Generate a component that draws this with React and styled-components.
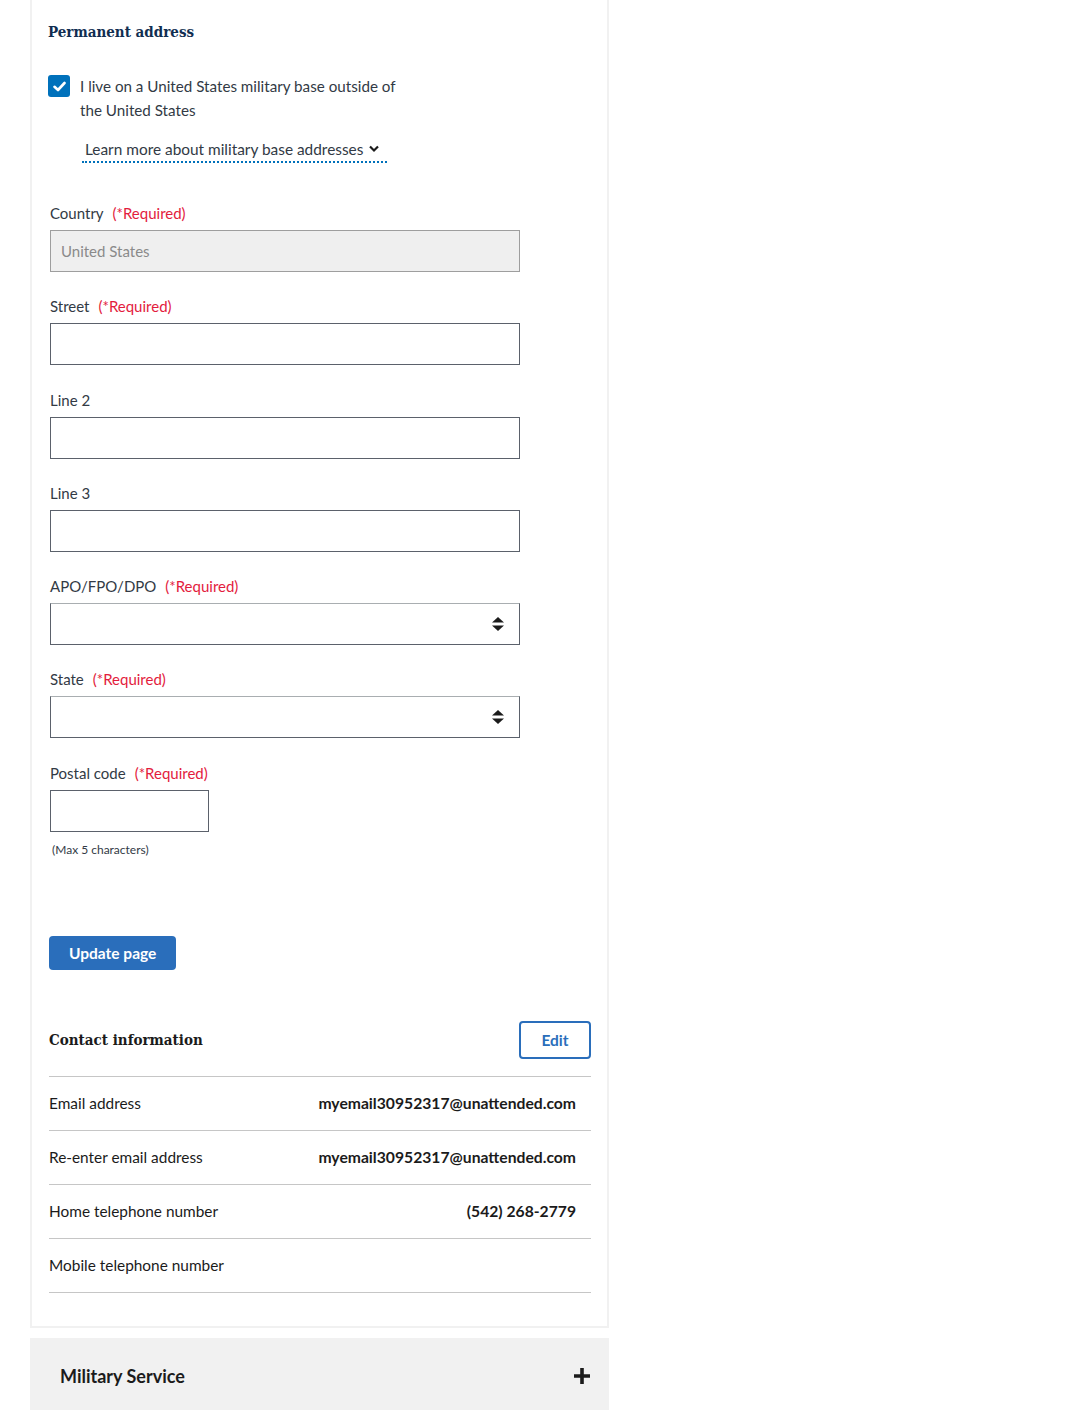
import React, { useState } from 'react';
import styled, { createGlobalStyle } from 'styled-components';

const GlobalStyle = createGlobalStyle`
  body {
    margin: 0;
    background: #ffffff;
    font-family: Lato, "Liberation Sans", sans-serif;
    color: #323a45;
  }
  * {
    box-sizing: border-box;
  }
`;

const SelectArrows = () => (
  <svg width="12" height="14" viewBox="0 0 12 14" aria-hidden="true">
    <path d="M6 0 L12 5.5 H0 Z" fill="#1b1b1b" />
    <path d="M6 14 L12 8.5 H0 Z" fill="#1b1b1b" />
  </svg>
);

const ChevronDown = () => (
  <svg width="10" height="8" viewBox="0 0 10 8" aria-hidden="true">
    <path d="M1 1.5 L5 5.5 L9 1.5" fill="none" stroke="#1b1b1b" strokeWidth="2.2" />
  </svg>
);

const CheckMark = () => (
  <svg width="13" height="11" viewBox="0 0 13 11" aria-hidden="true">
    <path d="M1.5 5.8 L5 9 L11.5 2" fill="none" stroke="#ffffff" strokeWidth="2.6" strokeLinecap="round" strokeLinejoin="round" />
  </svg>
);

const PlusIcon = () => (
  <svg width="16" height="16" viewBox="0 0 16 16" aria-hidden="true">
    <path d="M6.2 0 H9.8 V6.2 H16 V9.8 H9.8 V16 H6.2 V9.8 H0 V6.2 H6.2 Z" fill="#1b1b1b" />
  </svg>
);

const fields = [
  { label: 'Country', required: true, kind: 'disabled', value: 'United States' },
  { label: 'Street', required: true, kind: 'text' },
  { label: 'Line 2', kind: 'text' },
  { label: 'Line 3', kind: 'text' },
  { label: 'APO/FPO/DPO', required: true, kind: 'select' },
  { label: 'State', required: true, kind: 'select' },
  { label: 'Postal code', required: true, kind: 'short', hint: '(Max 5 characters)' },
];

const contactRows = [
  { label: 'Email address', value: 'myemail30952317@unattended.com' },
  { label: 'Re-enter email address', value: 'myemail30952317@unattended.com' },
  { label: 'Home telephone number', value: '(542) 268-2779' },
  { label: 'Mobile telephone number', value: '' },
];

const App = () => {
  const [onBase, setOnBase] = useState(true);

  return (
    <Page>
      <GlobalStyle />
      <Panel>
        <SectionTitle>Permanent address</SectionTitle>

        <CheckRow>
          <CheckBox type="button" checked={onBase} onClick={() => setOnBase(!onBase)}>
            {onBase && <CheckMark />}
          </CheckBox>
          <CheckLabel>I live on a United States military base outside of the United States</CheckLabel>
        </CheckRow>

        <LearnMore type="button">
          Learn more about military base addresses <ChevronDown />
        </LearnMore>

        <Fields>
          {fields.map((f) => (
            <Field key={f.label}>
              <FieldLabel>
                {f.label}
                {f.required && <Required>(*Required)</Required>}
              </FieldLabel>
              {f.kind === 'select' ? (
                <SelectBox>
                  <SelectArrows />
                </SelectBox>
              ) : (
                <TextInput
                  disabled={f.kind === 'disabled'}
                  $short={f.kind === 'short'}
                  defaultValue={f.value || ''}
                />
              )}
              {f.hint && <Hint>{f.hint}</Hint>}
            </Field>
          ))}
        </Fields>

        <PrimaryButton type="button">Update page</PrimaryButton>

        <ContactHeader>
          <ContactTitle>Contact information</ContactTitle>
          <OutlineButton type="button">Edit</OutlineButton>
        </ContactHeader>

        <InfoList>
          {contactRows.map((r) => (
            <InfoRow key={r.label}>
              <span>{r.label}</span>
              <InfoValue>{r.value}</InfoValue>
            </InfoRow>
          ))}
        </InfoList>
      </Panel>

      <Accordion>
        <AccordionTitle>Military Service</AccordionTitle>
        <PlusIcon />
      </Accordion>
    </Page>
  );
};

const Page = styled.div`
  width: 609px;
  padding-left: 30px;
`;

const Panel = styled.section`
  border: 2px solid #f1f1f1;
  border-top: none;
  padding: 20px 16px 33px 17px;
`;

const SectionTitle = styled.h3`
  margin: 0 0 0 -1px;
  font-family: "DejaVu Serif Condensed", "DejaVu Serif", serif;
  font-size: 15px;
  line-height: 24px;
  font-weight: 700;
  color: #112e51;
`;

const CheckRow = styled.div`
  display: flex;
  align-items: flex-start;
  gap: 10px;
  margin-top: 30px;
  margin-left: -1px;
  width: 370px;
`;

const CheckBox = styled.button`
  flex: none;
  display: flex;
  align-items: center;
  justify-content: center;
  width: 22px;
  height: 22px;
  margin-top: 1px;
  padding: 0;
  border: none;
  border-radius: 3px;
  background: ${(p) => (p.checked ? '#0071bb' : '#ffffff')};
  box-shadow: ${(p) => (p.checked ? 'none' : 'inset 0 0 0 2px #757575')};
  cursor: pointer;
`;

const CheckLabel = styled.span`
  font-size: 15.2px;
  line-height: 24px;
  color: #323a45;
`;

const LearnMore = styled.button`
  display: flex;
  align-items: center;
  gap: 6px;
  margin: 15px 0 0 33px;
  padding: 0 8px 0 3px;
  border: none;
  border-bottom: 2px dotted #0071bb;
  background: none;
  font-family: inherit;
  font-size: 15.4px;
  line-height: 24px;
  color: #323a45;
  cursor: pointer;
`;

const Fields = styled.div`
  display: flex;
  flex-direction: column;
  gap: 22.3px;
  margin-top: 38px;
  padding-left: 1px;
`;

const Field = styled.div`
  display: flex;
  flex-direction: column;
  align-items: flex-start;
`;

const FieldLabel = styled.label`
  display: flex;
  gap: 9px;
  font-size: 15px;
  line-height: 24px;
  color: #323a45;
`;

const Required = styled.span`
  color: #e31c3d;
`;

const TextInput = styled.input`
  width: ${(p) => (p.$short ? '159px' : '470px')};
  height: 42px;
  margin-top: 5px;
  padding: 0 10px;
  border: 1px solid #5b616b;
  border-radius: 0;
  background: #ffffff;
  font-family: inherit;
  font-size: 15px;
  color: #323a45;

  &:disabled {
    background: #efefef;
    border-color: #9e9e9e;
    color: #8a8a8a;
  }
`;

const SelectBox = styled.div`
  display: flex;
  align-items: center;
  justify-content: flex-end;
  width: 470px;
  height: 42px;
  margin-top: 5px;
  padding-right: 15px;
  border: 1px solid #5b616b;
  border-top-color: #a9aeb1;
  background: #ffffff;
`;

const Hint = styled.span`
  margin: 10px 0 0 2px;
  font-size: 12px;
  line-height: 16px;
  color: #323a45;
`;

const PrimaryButton = styled.button`
  display: block;
  margin-top: 78px;
  height: 34px;
  padding: 0 20px;
  border: none;
  border-radius: 4px;
  background: #2a6ebb;
  font-family: inherit;
  font-size: 15.5px;
  font-weight: 700;
  color: #ffffff;
  cursor: pointer;
`;

const ContactHeader = styled.div`
  display: flex;
  align-items: center;
  justify-content: space-between;
  margin-top: 51px;
  padding-bottom: 17px;
  border-bottom: 1px solid #c6c6c6;
`;

const ContactTitle = styled.h3`
  margin: 0;
  font-family: "DejaVu Serif Condensed", "DejaVu Serif", serif;
  font-size: 15px;
  line-height: 24px;
  font-weight: 700;
  color: #1b1b1b;
`;

const OutlineButton = styled.button`
  width: 72px;
  height: 38px;
  border: 2px solid #2a6ebb;
  border-radius: 4px;
  background: #ffffff;
  font-family: inherit;
  font-size: 15.5px;
  font-weight: 700;
  color: #2a6ebb;
  cursor: pointer;
`;

const InfoList = styled.div`
  display: flex;
  flex-direction: column;
`;

const InfoRow = styled.div`
  display: flex;
  align-items: center;
  justify-content: space-between;
  height: 54px;
  padding-right: 15px;
  padding-bottom: 1px;
  border-bottom: 1px solid #c6c6c6;
  font-size: 15.4px;
  color: #1b1b1b;
`;

const InfoValue = styled.span`
  font-size: 15.7px;
  font-weight: 700;
`;

const Accordion = styled.div`
  display: flex;
  align-items: center;
  justify-content: space-between;
  margin-top: 10px;
  padding: 26px 19px 26px 30px;
  background: #f1f1f1;
`;

const AccordionTitle = styled.h4`
  margin: 0;
  font-size: 18px;
  line-height: 24px;
  font-weight: 700;
  color: #1b1b1b;
`;

export default App;
